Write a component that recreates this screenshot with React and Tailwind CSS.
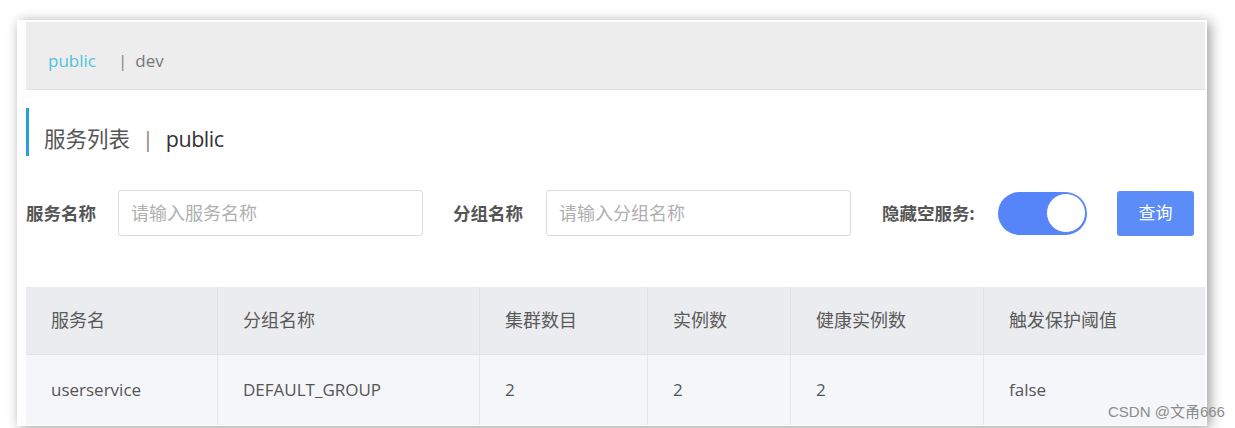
import React from 'react';

const font = { fontFamily: '"Open Sans", "Noto Sans CJK SC", sans-serif' };

const cols = [
  { title: '服务名', value: 'userservice', w: 'w-[191px]' },
  { title: '分组名称', value: 'DEFAULT_GROUP', w: 'w-[262px]' },
  { title: '集群数目', value: '2', w: 'w-[168px]' },
  { title: '实例数', value: '2', w: 'w-[143px]' },
  { title: '健康实例数', value: '2', w: 'w-[193px]' },
  { title: '触发保护阈值', value: 'false', w: 'flex-1' },
];

function Field({ label, placeholder, labelW }) {
  return (
    <div className="flex items-center">
      <span className={`text-[17.5px] font-bold text-[#555] whitespace-nowrap ${labelW}`}>{label}</span>
      <div className="w-[305px] h-[46px] border border-[#dcdcdc] rounded-[3px] flex items-center px-3 text-[18px] text-[#b0b0b0]">
        {placeholder}
      </div>
    </div>
  );
}

export default function App() {
  return (
    <div className="relative w-[1235px] h-[428px] bg-white overflow-hidden" style={font}>
      <div className="absolute left-[17px] top-[20px] w-[1190px] h-[406px] bg-white pl-[9px] pr-[2px] pt-[2px] shadow-[3px_2px_12px_rgba(0,0,0,0.4)]">
        <div className="h-[68px] bg-[#ededed] border-b border-[#e0e0e0] flex items-center pl-[22px] pt-[10px] text-[17px]">
          <span className="text-[#52c2e0]">public</span>
          <span className="ml-[22px] text-[#8a7f8a]">|</span>
          <span className="ml-[8px] text-[#777]">dev</span>
        </div>

        <div className="mt-[18px] h-[48px] flex items-center border-l-[3px] border-[#2a9fd6] pl-[15px] pt-[14px] text-[21.5px]">
          <span className="text-[#555]">服务列表</span>
          <span className="ml-[12px] text-[#8a7f8a]">|</span>
          <span className="ml-[12px] text-[#333] tracking-[-0.5px]">public</span>
        </div>

        <div className="mt-[34px] h-[46px] flex items-center">
          <Field label="服务名称" placeholder="请输入服务名称" labelW="w-[92px]" />
          <div className="ml-[30px]">
            <Field label="分组名称" placeholder="请输入分组名称" labelW="w-[93px]" />
          </div>
          <span className="ml-[31px] w-[116px] text-[17.5px] font-bold text-[#555] whitespace-nowrap">隐藏空服务:</span>
          <div className="w-[89px] h-[43px] rounded-full bg-[#5585f8] flex items-center justify-end pr-[1px]">
            <div className="w-[40px] h-[40px] rounded-full bg-white border border-[#5585f8]" />
          </div>
          <button className="ml-[30px] w-[77px] h-[45px] rounded-[3px] bg-[#5b8cf8] text-white text-[17px]">
            查询
          </button>
        </div>

        <div className="mt-[51px]">
          <div className="flex h-[68px] bg-[#ebecf0] border-b border-[#e2e3e7]">
            {cols.map((c, i) => (
              <div key={i} className={`${c.w} flex items-center pl-[25px] text-[18px] text-[#5a5a5a] ${i ? 'border-l border-[#dfe0e4]' : ''}`}>
                {c.title}
              </div>
            ))}
          </div>
          <div className="flex h-[70px] bg-[#f5f6f9]">
            {cols.map((c, i) => (
              <div key={i} className={`${c.w} flex items-center pl-[25px] text-[17px] text-[#555] ${i ? 'border-l border-[#e6e7ea]' : ''}`}>
                {c.value}
              </div>
            ))}
          </div>
        </div>
      </div>
      <div className="absolute left-[1108px] top-[401px] text-[15px] text-[#8c8c8c]" style={{ fontFamily: '"Liberation Sans", "Noto Sans CJK SC", sans-serif' }}>
        CSDN @文甬666
      </div>
    </div>
  );
}
